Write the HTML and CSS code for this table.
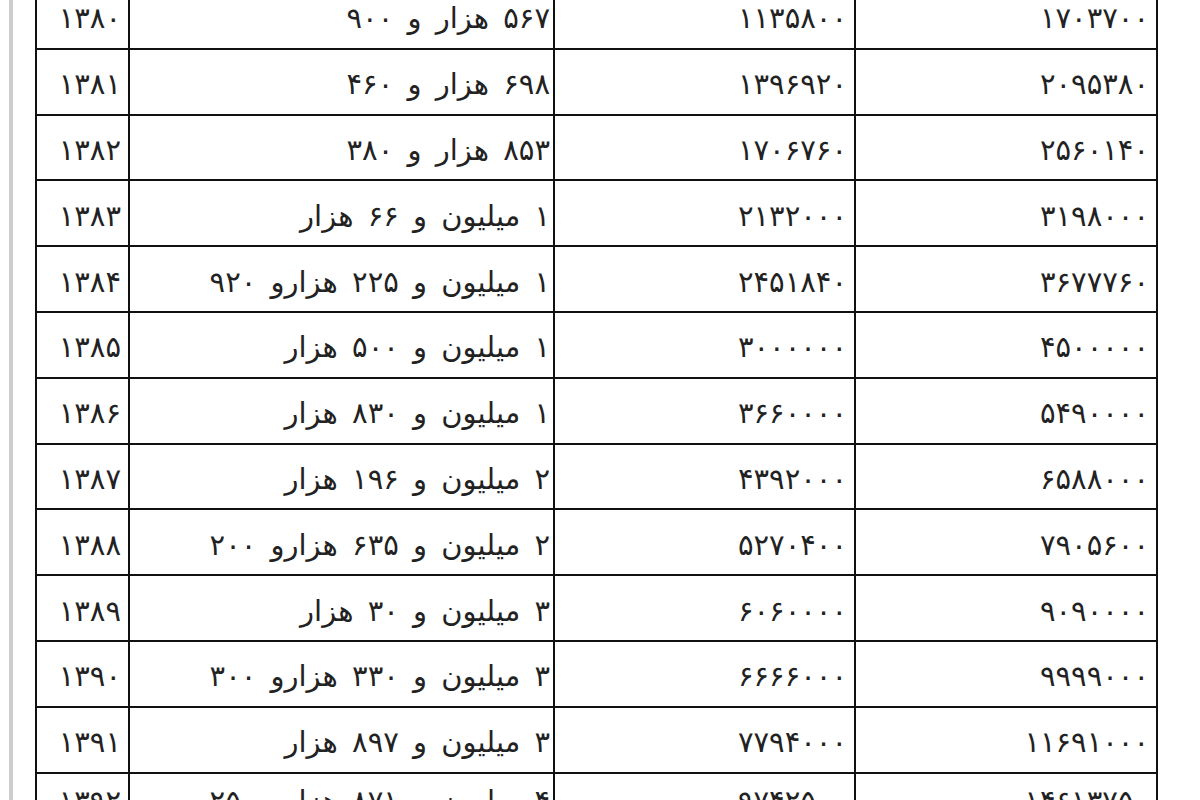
FILE: index.html
```html
<!DOCTYPE html>
<html lang="fa">
<head>
<meta charset="utf-8">
<title>جدول حقوق</title>
<link rel="stylesheet" href="styles.css">
</head>
<body>
<div class="frame">
  <table class="wage" dir="rtl">
    <colgroup>
      <col class="c-a"><col class="c-b"><col class="c-c"><col class="c-d">
    </colgroup>
    <tbody>
      <tr><td>۱۷۰۳۷۰۰</td><td>۱۱۳۵۸۰۰</td><td class="words">۵۶۷ هزار و ۹۰۰</td><td>۱۳۸۰</td></tr>
      <tr><td>۲۰۹۵۳۸۰</td><td>۱۳۹۶۹۲۰</td><td class="words">۶۹۸ هزار و ۴۶۰</td><td>۱۳۸۱</td></tr>
      <tr><td>۲۵۶۰۱۴۰</td><td>۱۷۰۶۷۶۰</td><td class="words">۸۵۳ هزار و ۳۸۰</td><td>۱۳۸۲</td></tr>
      <tr><td>۳۱۹۸۰۰۰</td><td>۲۱۳۲۰۰۰</td><td class="words">۱ میلیون و ۶۶ هزار</td><td>۱۳۸۳</td></tr>
      <tr><td>۳۶۷۷۷۶۰</td><td>۲۴۵۱۸۴۰</td><td class="words">۱ میلیون و ۲۲۵ هزارو ۹۲۰</td><td>۱۳۸۴</td></tr>
      <tr><td>۴۵۰۰۰۰۰</td><td>۳۰۰۰۰۰۰</td><td class="words">۱ میلیون و ۵۰۰ هزار</td><td>۱۳۸۵</td></tr>
      <tr><td>۵۴۹۰۰۰۰</td><td>۳۶۶۰۰۰۰</td><td class="words">۱ میلیون و ۸۳۰ هزار</td><td>۱۳۸۶</td></tr>
      <tr><td>۶۵۸۸۰۰۰</td><td>۴۳۹۲۰۰۰</td><td class="words">۲ میلیون و ۱۹۶ هزار</td><td>۱۳۸۷</td></tr>
      <tr><td>۷۹۰۵۶۰۰</td><td>۵۲۷۰۴۰۰</td><td class="words">۲ میلیون و ۶۳۵ هزارو ۲۰۰</td><td>۱۳۸۸</td></tr>
      <tr><td>۹۰۹۰۰۰۰</td><td>۶۰۶۰۰۰۰</td><td class="words">۳ میلیون و ۳۰ هزار</td><td>۱۳۸۹</td></tr>
      <tr><td>۹۹۹۹۰۰۰</td><td>۶۶۶۶۰۰۰</td><td class="words">۳ میلیون و ۳۳۰ هزارو ۳۰۰</td><td>۱۳۹۰</td></tr>
      <tr><td>۱۱۶۹۱۰۰۰</td><td>۷۷۹۴۰۰۰</td><td class="words">۳ میلیون و ۸۹۷ هزار</td><td>۱۳۹۱</td></tr>
      <tr class="last"><td>۱۴۶۱۳۷۵۰</td><td>۹۷۴۲۵۰۰</td><td class="words">۴ میلیون و ۸۷۱ هزارو ۲۵۰</td><td>۱۳۹۲</td></tr>
    </tbody>
  </table>
</div>
</body>
</html>
```

FILE: styles.css
```css
html, body {
  margin: 0;
  padding: 0;
  background: #ffffff;
  overflow: hidden;
}

body {
  width: 1200px;
  height: 800px;
}

.frame {
  margin-left: 9px;
  width: 1173px;
  height: 800px;
  border-left: 4px solid #cdcdcd;
  border-right: 4px solid #d2d2d2;
  padding-left: 22px;
  overflow: hidden;
  box-sizing: content-box;
}

.wage {
  margin-top: -18px;
  border-collapse: collapse;
  table-layout: fixed;
  width: 1123px;
  font-family: "DejaVu Sans", "Noto Sans", sans-serif;
  font-size: 29px;
  color: #222222;
}

.c-a { width: 302px; }
.c-b { width: 301px; }
.c-c { width: 425px; }
.c-d { width: 93px; }

.wage td {
  height: 65.8px;
  border: 2px solid #111111;
  text-align: right;
  vertical-align: middle;
  padding: 5px 7px 0 7px;
  white-space: nowrap;
  overflow: hidden;
  box-sizing: border-box;
}

.wage td.words {
  padding-right: 3px;
  word-spacing: 5px;
}

.wage tr.last td {
  padding-top: 0;
  padding-bottom: 8px;
}
```
